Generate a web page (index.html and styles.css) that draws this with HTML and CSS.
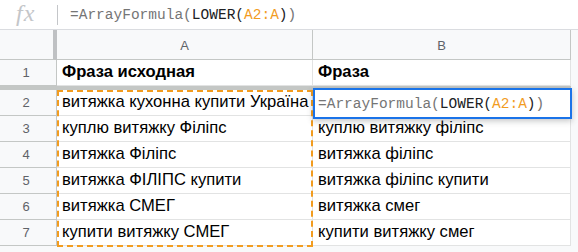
FILE: index.html
```html
<!DOCTYPE html>
<html lang="uk">
<head>
    <meta charset="UTF-8">
    <meta name="viewport" content="width=device-width, initial-scale=1.0">
    <title>Таблиця</title>
    <link rel="stylesheet" href="styles.css">
</head>
<body>
    <div class="formula-bar">
        <span class="fx">fx</span>
        <span class="fx-sep"></span>
        <span class="formula"><span class="f-gray">=ArrayFormula(</span><span class="f-dark">LOWER(</span><span class="f-ref">A2:A</span><span class="f-dark">)</span><span class="f-gray">)</span></span>
    </div>

    <div class="sheet">
        <div class="grid">
            <!-- заголовки колонок -->
            <div class="corner"></div>
            <div class="col-head">A</div>
            <div class="col-head">B</div>

            <!-- закріплений рядок -->
            <div class="row-head">1</div>
            <div class="cell bold">Фраза исходная</div>
            <div class="cell bold">Фраза</div>
            <div class="freeze"></div>

            <div class="row-head">2</div>
            <div class="cell">витяжка кухонна купити Україна</div>
            <div class="cell"></div>

            <div class="row-head">3</div>
            <div class="cell">куплю витяжку Філіпс</div>
            <div class="cell">куплю витяжку філіпс</div>

            <div class="row-head">4</div>
            <div class="cell">витяжка Філіпс</div>
            <div class="cell">витяжка філіпс</div>

            <div class="row-head">5</div>
            <div class="cell">витяжка ФІЛІПС купити</div>
            <div class="cell">витяжка філіпс купити</div>

            <div class="row-head">6</div>
            <div class="cell">витяжка СМЕГ</div>
            <div class="cell">витяжка смег</div>

            <div class="row-head">7</div>
            <div class="cell">купити витяжку СМЕГ</div>
            <div class="cell">купити витяжку смег</div>

            <!-- скопійований діапазон A2:A7 -->
            <div class="copy-range"></div>
            <!-- редактор комірки B2 -->
            <div class="editor"><span class="f-gray">=ArrayFormula(</span><span class="f-dark">LOWER(</span><span class="f-ref">A2:A</span><span class="f-dark">)</span><span class="f-gray">)</span></div>
        </div>
    </div>
</body>
</html>
```

FILE: styles.css
```css
body {
    margin: 0;
    font-family: 'Liberation Sans', Arial, sans-serif;
    background: #f8f9fa;
    width: 578px;
    height: 252px;
    overflow: hidden;
}
.formula-bar {
    height: 29px;
    background: white;
    border-bottom: 1px solid #dadce0;
    display: flex;
    align-items: center;
}
.fx {
    width: 57px;
    padding: 0 0 4px 16px;
    box-sizing: border-box;
    font-family: 'Liberation Serif', serif;
    font-style: italic;
    font-size: 24px;
    line-height: 24px;
    color: #c4c6c9;
    letter-spacing: 1px;
}
.fx-sep {
    width: 1px;
    height: 20px;
    background: #c4c6c9;
    margin-right: 12px;
}
.formula,
.editor {
    font-family: 'Liberation Mono', 'DejaVu Sans Mono', monospace;
    font-size: 14.5px;
}
.f-gray {
    color: #757575;
}
.f-dark {
    color: #202124;
}
.f-ref {
    color: #f29c1f;
}
.sheet {
    display: flex;
}
.grid {
    position: relative;
    display: grid;
    grid-template-columns: 53px 4px 256px 258px;
    grid-template-rows: 30px 26px 4px repeat(6, 26px);
    background: white;
}
.corner {
    grid-column: 1 / 3;
    background: #f8f9fa;
    border-right: 4px solid #bfc1c3;
    border-bottom: 1px solid #c4c7c5;
    box-sizing: border-box;
}
.col-head {
    background: #f8f9fa;
    border-right: 1px solid #c4c7c5;
    border-bottom: 1px solid #c4c7c5;
    box-sizing: border-box;
    display: flex;
    align-items: center;
    justify-content: center;
    font-size: 13px;
    color: #5f6368;
    padding-top: 2px;
}
.row-head {
    grid-column: 1 / 3;
    background: #f8f9fa;
    border-right: 1px solid #c4c7c5;
    border-bottom: 1px solid #c4c7c5;
    box-sizing: border-box;
    display: flex;
    align-items: center;
    justify-content: center;
    font-size: 13px;
    color: #5f6368;
    padding-right: 4px;
}
.cell {
    border-right: 1px solid #e2e3e3;
    border-bottom: 1px solid #e2e3e3;
    box-sizing: border-box;
    padding: 0 4px 3px 5px;
    display: flex;
    align-items: flex-end;
    font-size: 16.6px;
    line-height: 20px;
    color: #000;
    white-space: nowrap;
    overflow: hidden;
}
.bold {
    font-weight: bold;
}
.freeze {
    grid-column: 1 / 5;
    background: #c4c7c5;
}
.copy-range {
    position: absolute;
    left: 57px;
    top: 60px;
    width: 256px;
    height: 157px;
    border: 2px dashed #f29c1f;
    box-sizing: border-box;
    pointer-events: none;
}
.editor {
    position: absolute;
    left: 313px;
    top: 58px;
    width: 259px;
    height: 31px;
    border: 2px solid #1a73e8;
    box-sizing: border-box;
    background: white;
    box-shadow: 0 2px 6px rgba(60, 64, 67, 0.3);
    padding: 3px 0 0 3px;
    line-height: 22px;
}
```
